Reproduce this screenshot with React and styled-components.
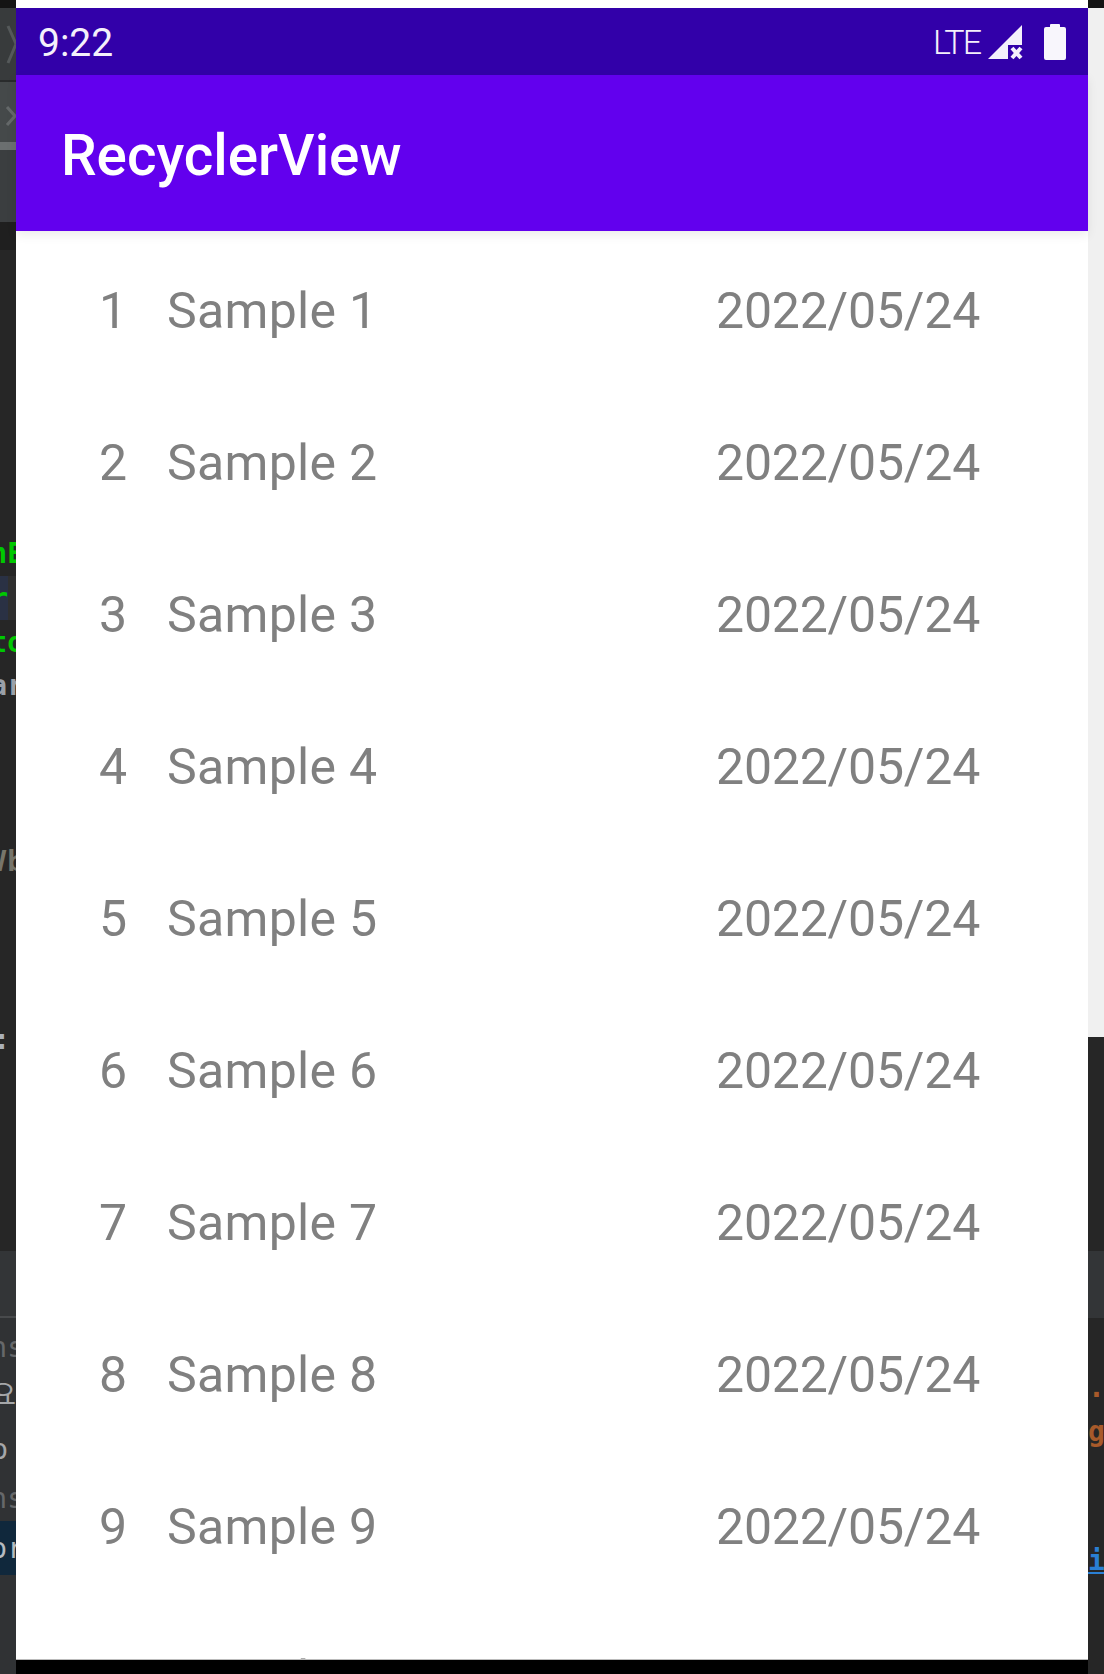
import React from 'react'
import styled, { createGlobalStyle } from 'styled-components'

const GlobalStyle = createGlobalStyle`
  html, body {
    margin: 0;
    padding: 0;
    background: #262626;
  }
`

const Page = styled.div`
  width: 1104px;
  height: 1674px;
  display: flex;
  overflow: hidden;
  font-family: Roboto, sans-serif;
`

const Rail = styled.div`
  width: 16px;
  flex-shrink: 0;
  display: flex;
  flex-direction: column;
  background: #262626;
`

const RailRow = styled.div`
  height: ${props => props.$height}px;
  flex-shrink: 0;
  display: flex;
  align-items: center;
  justify-content: ${props => (props.$right ? 'flex-start' : 'flex-end')};
  overflow: hidden;
  white-space: nowrap;
  background: ${props => props.$bg || 'transparent'};
  border-bottom: ${props => (props.$line ? `2px solid ${props.$line}` : '0')};
  box-sizing: border-box;
`

const Code = styled.span`
  font-family: "DejaVu Sans Mono", "Noto Sans CJK KR", monospace;
  font-size: 28px;
  font-weight: ${props => (props.$bold ? 700 : 400)};
  color: ${props => props.$color};
  flex-shrink: 0;
  margin-right: ${props => -props.$shift}px;
  text-decoration: ${props => (props.$underline ? 'underline' : 'none')};
`

const Phone = styled.div`
  flex: 1;
  min-width: 0;
  display: flex;
  flex-direction: column;
  background: #000;
`

const TopStrip = styled.div`
  height: 8px;
  flex-shrink: 0;
  background: #fff;
`

const StatusBar = styled.div`
  height: 67px;
  flex-shrink: 0;
  display: flex;
  align-items: center;
  justify-content: space-between;
  padding: 0 22px;
  background: #3200a9;
  color: #f4f0fb;
`

const Clock = styled.span`
  font-size: 39px;
  line-height: 1;
  margin-top: 3px;
`

const StatusIcons = styled.div`
  display: flex;
  align-items: center;
`

const Lte = styled.span`
  font-size: 34px;
  font-weight: 300;
  letter-spacing: -2px;
  line-height: 1;
  margin: 0 7px 0 0;
`

const BatteryWrap = styled.div`
  display: flex;
  margin-left: 21px;
`

const AppBar = styled.header`
  height: 156px;
  flex-shrink: 0;
  position: relative;
  z-index: 1;
  display: flex;
  align-items: center;
  padding: 6px 0 0 45px;
  box-sizing: border-box;
  background: #6200ee;
  box-shadow: 0 4px 10px rgba(0, 0, 0, 0.08);
`

const Title = styled.h1`
  margin: 0;
  color: #fff;
  font-size: 56.6px;
  font-weight: 500;
  line-height: 1;
`

const List = styled.div`
  height: 1429px;
  flex-shrink: 0;
  overflow: hidden;
  background: #fff;
  border-bottom: 1px solid #bbb;
  box-sizing: border-box;
  padding-top: 4px;
`

const Row = styled.div`
  height: 152px;
  display: flex;
  align-items: center;
  padding-left: 83px;
  color: #808080;
  font-size: 50px;
`

const Num = styled.span`
  width: 68px;
  flex-shrink: 0;
`

const Name = styled.span`
  width: 549px;
  flex-shrink: 0;
  letter-spacing: 0.3px;
`

const DateText = styled.span`
  letter-spacing: -0.2px;
`

const leftRail = [
  { height: 8, bg: '#141414' },
  { height: 74, bg: '#383b3c', line: '#292b2c', chevron: 'big' },
  { height: 60, bg: '#45494a', chevron: 'small' },
  { height: 8, bg: '#6b6f70' },
  { height: 72, bg: '#3b3e40' },
  { height: 28, bg: '#1f1f1f' },
  { height: 280 },
  { height: 46, text: 'nE', color: '#00c800', bold: true, shift: 8 },
  { height: 44, text: 'r', color: '#00c800', bold: true, shift: -8, bg: 'linear-gradient(90deg, #2a3144 50%, #2f2f2f 50%)' },
  { height: 44, text: 'to', color: '#00c800', bold: true, shift: 8 },
  { height: 42, text: 'ar', color: '#9aa0a8', bold: true, shift: 8 },
  { height: 135 },
  { height: 40, text: 'Vb', color: '#77756a', bold: true, shift: 8 },
  { height: 138 },
  { height: 40, text: ':', color: '#a9b0b8', bold: true, shift: -6 },
  { height: 192 },
  { height: 67, bg: '#333537', line: '#484a4c' },
  { height: 7, bg: '#303234' },
  { height: 44, bg: '#303234', text: 'ns', color: '#66686a', shift: 8 },
  { height: 2, bg: '#303234' },
  { height: 44, bg: '#303234', text: '요', color: '#a5a7a9', shift: 0 },
  { height: 12, bg: '#303234' },
  { height: 44, bg: '#303234', text: 'o', color: '#a5a7a9', shift: -8 },
  { height: 5, bg: '#303234' },
  { height: 44, bg: '#303234', text: 'ns', color: '#66686a', shift: 8 },
  { height: 1, bg: '#303234' },
  { height: 54, bg: '#10283c', text: 'or', color: '#b5bbc0', shift: 8 },
  { height: 99, bg: '#303234' }
]

const rightRail = [
  { height: 8, bg: '#141414' },
  { height: 1029, bg: '#f0f0f0' },
  { height: 214 },
  { height: 67, bg: '#333537' },
  { height: 47 },
  { height: 44, text: '.:', color: '#a85a2a', bold: true, shift: 4 },
  { height: 44, text: 'g', color: '#a85a2a', bold: true, shift: 0 },
  { height: 85 },
  { height: 44, text: 'i', color: '#2a7fd4', bold: true, underline: true, shift: 0 },
  { height: 92 }
]

const Chevron = ({ big }) => (
  <svg width="16" height={big ? 72 : 60} viewBox={big ? '0 0 16 72' : '0 0 16 60'} fill="none" stroke={big ? '#55595a' : '#65696a'} strokeWidth="3">
    {big ? <path d="M8 18 L16 36 L8 55" /> : <path d="M7 25 L15 34 L7 43" />}
  </svg>
)

const SignalIcon = () => (
  <svg width="36" height="36" viewBox="0 0 36 36">
    <path d="M1 35 L35 1 V21 H21 V35 Z" fill="#f4f0fb" />
    <path d="M25 24 L34 34 M34 24 L25 34" stroke="#f4f0fb" strokeWidth="4" />
  </svg>
)

const BatteryIcon = () => (
  <svg width="22" height="36" viewBox="0 0 22 36">
    <path d="M6 3 V1 Q6 0 7 0 H15 Q16 0 16 1 V3 H20 Q22 3 22 5 V34 Q22 36 20 36 H2 Q0 36 0 34 V5 Q0 3 2 3 Z" fill="#f8f6fc" />
  </svg>
)

const renderRail = (rows, right) => rows.map((row, i) => (
  <RailRow key={i} $height={row.height} $bg={row.bg} $line={row.line} $right={right}>
    {row.chevron && <Chevron big={row.chevron === 'big'} />}
    {row.text && (
      <Code $color={row.color} $bold={row.bold} $underline={row.underline} $shift={right ? -row.shift : row.shift}>
        {row.text}
      </Code>
    )}
  </RailRow>
))

export default function App() {
  const items = [1, 2, 3, 4, 5, 6, 7, 8, 9, 10]
  return (
    <Page>
      <GlobalStyle />
      <Rail>{renderRail(leftRail, false)}</Rail>
      <Phone>
        <TopStrip />
        <StatusBar>
          <Clock>9:22</Clock>
          <StatusIcons>
            <Lte>LTE</Lte>
            <SignalIcon />
            <BatteryWrap>
              <BatteryIcon />
            </BatteryWrap>
          </StatusIcons>
        </StatusBar>
        <AppBar>
          <Title>RecyclerView</Title>
        </AppBar>
        <List>
          {items.map(n => (
            <Row key={n}>
              <Num>{n}</Num>
              <Name>Sample {n}</Name>
              <DateText>2022/05/24</DateText>
            </Row>
          ))}
        </List>
      </Phone>
      <Rail>{renderRail(rightRail, true)}</Rail>
    </Page>
  )
}
